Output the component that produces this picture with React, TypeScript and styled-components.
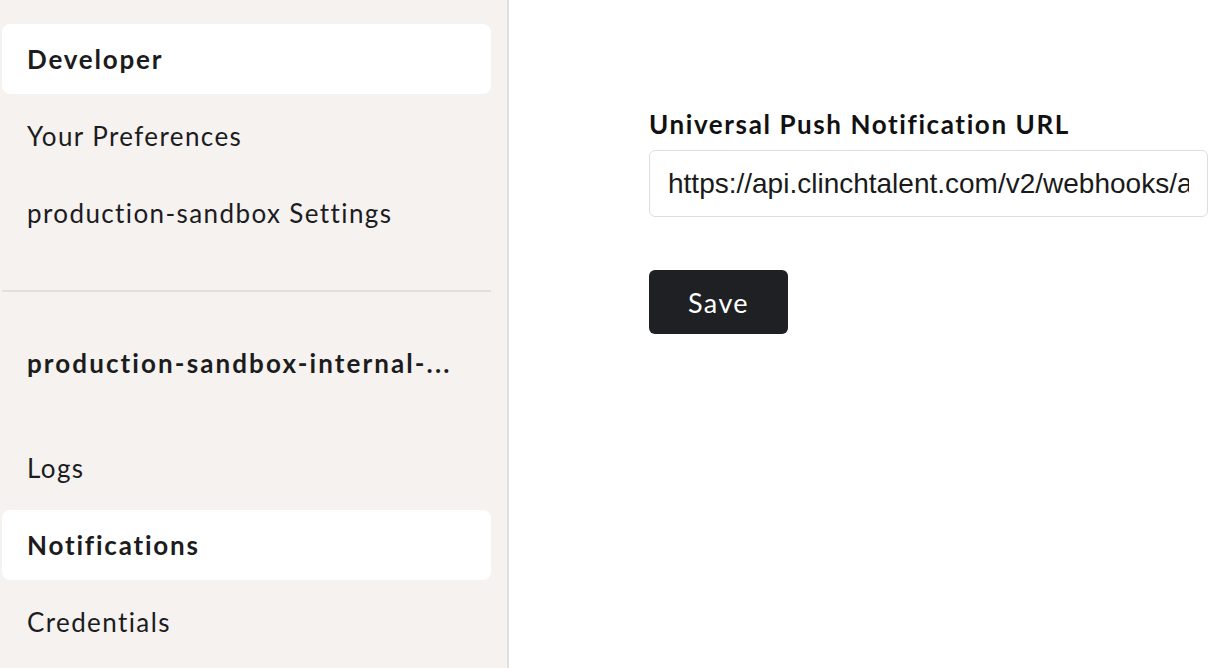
import React from "react";
import styled, { createGlobalStyle } from "styled-components";

const GlobalStyle = createGlobalStyle`
  html, body { margin: 0; padding: 0; background: #ffffff; }
  body { font-family: "Lato", "Noto Sans", sans-serif; color: #1c1c1e; }
  * { box-sizing: border-box; }
`;

const Page = styled.div`
  display: flex;
  height: 668px;
  overflow: hidden;
`;

const Sidebar = styled.nav`
  width: 509px;
  flex: none;
  background: #f5f2f0;
  border-right: 2px solid #e3dfdd;
  padding: 24px 16px 0 2px;
  display: flex;
  flex-direction: column;
`;

const NavItem = styled.div<{ $active?: boolean }>`
  height: 70px;
  display: flex;
  align-items: center;
  padding-left: 25px;
  margin-bottom: 7px;
  border-radius: 8px;
  font-size: 26px;
  letter-spacing: ${(p) => (p.$active ? "1.8px" : "1.4px")};
  font-weight: ${(p) => (p.$active ? 700 : 400)};
  background: ${(p) => (p.$active ? "#ffffff" : "transparent")};
  color: #1c1c1e;
  white-space: nowrap;
`;

const Divider = styled.hr`
  border: none;
  height: 2px;
  background: #e3e0de;
  margin: 35px 0 36px 0;
`;

const GroupHeader = styled.div`
  height: 70px;
  display: flex;
  align-items: center;
  padding-left: 25px;
  margin-bottom: 35px;
  font-size: 26px;
  letter-spacing: 2.1px;
  font-weight: 700;
  white-space: nowrap;
`;

const Main = styled.main`
  flex: 1;
  padding: 109px 0 0 140px;
`;

const Label = styled.label`
  display: block;
  font-size: 26px;
  letter-spacing: 1.6px;
  line-height: 30px;
  font-weight: 700;
  color: #111;
  margin-bottom: 11px;
`;

const UrlInput = styled.input`
  display: block;
  width: 559px;
  height: 67px;
  padding: 0 18px;
  border: 1.5px solid #dedede;
  border-radius: 6px;
  font-family: "Liberation Sans", Arial, sans-serif;
  font-size: 28px;
  color: #1a1a1a;
  background: #fff;
  outline: none;
`;

const SaveButton = styled.button`
  margin-top: 53px;
  width: 139px;
  height: 64px;
  border: none;
  border-radius: 6px;
  background: #1f2023;
  color: #ffffff;
  font-family: "Lato", "Noto Sans", sans-serif;
  font-size: 27px;
  letter-spacing: 1.4px;
  font-weight: 400;
  cursor: pointer;
`;

export default function App() {
  return (
    <>
      <GlobalStyle />
      <Page>
        <Sidebar>
          <NavItem $active>Developer</NavItem>
          <NavItem>Your Preferences</NavItem>
          <NavItem>production-sandbox Settings</NavItem>
          <Divider />
          <GroupHeader>production-sandbox-internal-...</GroupHeader>
          <NavItem>Logs</NavItem>
          <NavItem $active>Notifications</NavItem>
          <NavItem>Credentials</NavItem>
        </Sidebar>
        <Main>
          <Label htmlFor="url">Universal Push Notification URL</Label>
          <UrlInput
            id="url"
            readOnly
            value="https://api.clinchtalent.com/v2/webhooks/abcdef1234567890"
          />
          <SaveButton>Save</SaveButton>
        </Main>
      </Page>
    </>
  );
}
